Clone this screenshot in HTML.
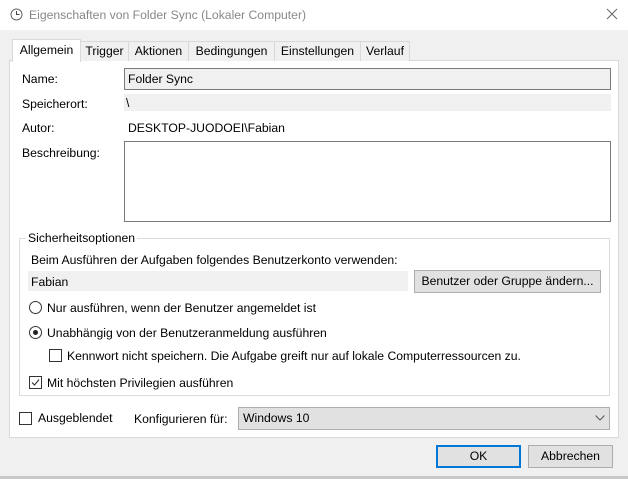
<!DOCTYPE html><html><head><meta charset="utf-8"><style>
*{box-sizing:border-box;margin:0;padding:0}
body{width:628px;height:479px;background:#f0f0f0;font-family:"Liberation Sans",sans-serif;font-size:12.2px;color:#000;position:relative;overflow:hidden}
.a{position:absolute;white-space:nowrap}
.t{line-height:14px}
.tab{position:absolute;top:41px;height:20px;border:1px solid #d9d9d9;border-bottom:none;background:#f0f0f0;text-align:center;line-height:18px}
.cb{position:absolute;width:13px;height:13px;border:1px solid #333;background:#fff}
.rb{position:absolute;width:13px;height:13px;border:1px solid #333;border-radius:50%;background:#fff}
.btn{position:absolute;background:#e1e1e1;border:1px solid #adadad;text-align:center}
</style></head><body>
<div class="a" style="left:0;top:0;width:628px;height:30px;background:#fff"></div>
<svg class="a" style="left:10px;top:8px" width="13" height="13" viewBox="0 0 13 13"><circle cx="6.5" cy="6.5" r="5.5" fill="#fff" stroke="#666"/><path d="M6.5 3v3.5h3" stroke="#444" fill="none"/></svg>
<div class="a t" style="left:29px;top:8px;color:#888">Eigenschaften von Folder Sync (Lokaler Computer)</div>
<svg class="a" style="left:606px;top:8px" width="12" height="12"><path d="M1 1L11 11M11 1L1 11" stroke="#666"/></svg>
<div class="a" style="left:9px;top:60px;width:610px;height:378px;background:#fff;border:1px solid #d9d9d9"></div>
<div class="tab" style="left:80px;width:49px">Trigger</div>
<div class="tab" style="left:128px;width:61px">Aktionen</div>
<div class="tab" style="left:188px;width:87px">Bedingungen</div>
<div class="tab" style="left:274px;width:87px">Einstellungen</div>
<div class="tab" style="left:360px;width:50px">Verlauf</div>
<div class="tab" style="left:12px;top:39px;width:69px;height:23px;background:#fff;line-height:20px">Allgemein</div>
<div class="a t" style="left:22px;top:72px">Name:</div>
<div class="a" style="left:124px;top:68px;width:487px;height:22px;background:#f0f0f0;border:1px solid #7a7a7a"></div>
<div class="a t" style="left:128px;top:72px">Folder Sync</div>
<div class="a t" style="left:22px;top:97px">Speicherort:</div>
<div class="a" style="left:124px;top:94px;width:487px;height:17px;background:#f0f0f0"></div>
<div class="a t" style="left:126px;top:96px">\</div>
<div class="a t" style="left:22px;top:121px">Autor:</div>
<div class="a t" style="left:128px;top:121px">DESKTOP-JUODOEI\Fabian</div>
<div class="a t" style="left:22px;top:146px">Beschreibung:</div>
<div class="a" style="left:124px;top:141px;width:487px;height:81px;background:#fff;border:1px solid #7a7a7a"></div>
<div class="a" style="left:19px;top:238px;width:591px;height:158px;border:1px solid #dcdcdc"></div>
<div class="a t" style="left:26px;top:231px;background:#fff;padding:0 2px">Sicherheitsoptionen</div>
<div class="a t" style="left:31px;top:253px">Beim Ausführen der Aufgaben folgendes Benutzerkonto verwenden:</div>
<div class="a" style="left:28px;top:271px;width:380px;height:20px;background:#f0f0f0"></div>
<div class="a t" style="left:31px;top:275px">Fabian</div>
<div class="btn" style="left:414px;top:270px;width:187px;height:23px;line-height:21px">Benutzer oder Gruppe ändern...</div>
<div class="rb" style="left:29px;top:301px"></div>
<div class="a t" style="left:47px;top:301px">Nur ausführen, wenn der Benutzer angemeldet ist</div>
<div class="rb" style="left:29px;top:326px"></div>
<div class="a" style="left:33px;top:330px;width:5px;height:5px;border-radius:50%;background:#222"></div>
<div class="a t" style="left:47px;top:326px">Unabhängig von der Benutzeranmeldung ausführen</div>
<div class="cb" style="left:49px;top:349px"></div>
<div class="a t" style="left:67px;top:349px">Kennwort nicht speichern. Die Aufgabe greift nur auf lokale Computerressourcen zu.</div>
<div class="cb" style="left:29px;top:376px"></div>
<svg class="a" style="left:29px;top:376px" width="13" height="13"><path d="M3 6.5L5.5 9L10 3.5" stroke="#222" fill="none"/></svg>
<div class="a t" style="left:47px;top:376px">Mit höchsten Privilegien ausführen</div>
<div class="cb" style="left:19px;top:412px"></div>
<div class="a t" style="left:38px;top:411px">Ausgeblendet</div>
<div class="a t" style="left:134px;top:412px">Konfigurieren für:</div>
<div class="btn" style="left:238px;top:407px;width:372px;height:23px;text-align:left;padding-left:4px;line-height:21px">Windows 10</div>
<svg class="a" style="left:595px;top:415px" width="10" height="6"><path d="M0.5 0.5L5 5L9.5 0.5" stroke="#555" fill="none"/></svg>
<div class="btn" style="left:436px;top:445px;width:85px;height:23px;border:2px solid #0078d7;line-height:19px">OK</div>
<div class="btn" style="left:528px;top:445px;width:85px;height:23px;line-height:21px">Abbrechen</div>
<div class="a" style="left:0;top:476px;width:628px;height:3px;background:#c8c8c8"></div>
</body></html>
